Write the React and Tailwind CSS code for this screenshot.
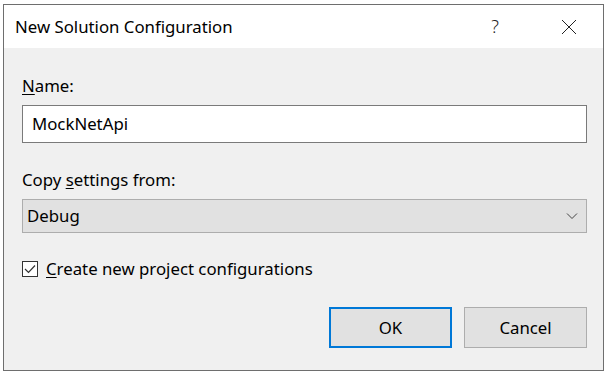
import React from "react";

export default function App() {
  const font = { fontFamily: '"Segoe UI", "Noto Sans", "Open Sans", sans-serif' };
  return (
    <div className="w-[608px] h-[374px] bg-white overflow-hidden" style={font}>
      <div className="ml-[3px] mt-[4px] w-[601px] h-[367px] border border-[#6e6e6e] flex flex-col bg-[#f0f0f0]">
        <div className="h-[43px] bg-white flex items-center pl-[11px] shrink-0">
          <div className="text-[16.8px] text-black flex-1">New Solution Configuration</div>
          <div className="text-[18px] text-[#222] w-[20px] text-center mr-[56px] font-light">?</div>
          <svg width="16" height="16" viewBox="0 0 16 16" className="mr-[26px]">
            <path d="M1 1 L15 15 M15 1 L1 15" stroke="#222" strokeWidth="1" fill="none" />
          </svg>
        </div>
        <div className="flex flex-col pl-[18px] pr-[16px] text-[16.8px] text-black">
          <div className="mt-[26px] h-[24px] leading-[24px]"><span className="underline underline-offset-2">N</span>ame:</div>
          <div className="mt-[7px] h-[38px] bg-white border border-[#7a7a7a] flex items-center pl-[9px]">MockNetApi</div>
          <div className="mt-[25px] h-[24px] leading-[24px]">Copy <span className="underline underline-offset-2">s</span>ettings from:</div>
          <div className="mt-[7px] h-[34px] bg-[#e1e1e1] border border-[#adadad] flex items-center pl-[4px] pr-[8px]">
            <span className="flex-1">Debug</span>
            <svg width="12" height="8" viewBox="0 0 12 8">
              <path d="M1 1.5 L6 6.5 L11 1.5" stroke="#444" strokeWidth="1" fill="none" />
            </svg>
          </div>
          <div className="mt-[26px] flex items-center h-[20px]">
            <div className="w-[16px] h-[16px] border border-[#333] bg-white flex items-center justify-center">
              <svg width="12" height="10" viewBox="0 0 12 10">
                <path d="M1 5 L4.5 8.5 L11 1.5" stroke="#333" strokeWidth="1.2" fill="none" />
              </svg>
            </div>
            <span className="ml-[8px]"><span className="underline underline-offset-2">C</span>reate new project configurations</span>
          </div>
          <div className="mt-[28px] flex justify-end gap-[12px]">
            <button className="w-[123px] h-[41px] bg-[#e1e1e1] border-2 border-[#0078d7] text-[16.8px]">OK</button>
            <button className="w-[123px] h-[41px] bg-[#e1e1e1] border border-[#adadad] text-[16.8px]">Cancel</button>
          </div>
        </div>
      </div>
    </div>
  );
}
